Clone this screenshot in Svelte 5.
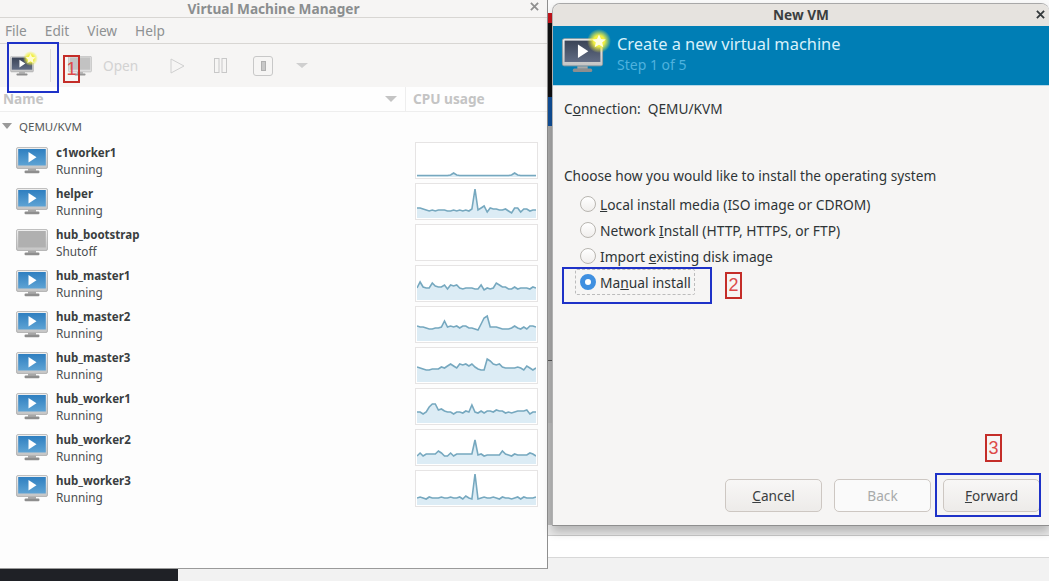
<script lang="ts">
    interface Vm
    {
        name: string;
        status: string;
        cpu: number[];
    }

    const vms: Vm[] = [
        { name: 'c1worker1', status: 'Running', cpu: [1.5,1.5,1.5,1.5,1.5,1.5,1.5,1.5,1.5,1.5,1.5,2,4,2,1.5,1.5,1.5,1.5,1.5,1.5,1.5,1.5,1.5,1.5,1.5,1.5,1.5,1.5,1.5,1.5,1.5,2,4,2,1.5,1.5,1.5,1.5,1.5,1.5] },
        { name: 'helper', status: 'Running', cpu: [10,10,9,8,7,8,7,8,8,8,7,7,8,7,8,7,8,7,9,29,8,10,12,6,10,9,9,8,8,9,7,5,10,10,6,9,9,7,8,8] },
        { name: 'hub_bootstrap', status: 'Shutoff', cpu: [] },
        { name: 'hub_master1', status: 'Running', cpu: [12,18,13,12,12,17,14,13,13,15,11,15,14,15,12,11,12,12,12,11,11,15,10,12,11,12,17,15,13,13,11,11,13,11,12,12,12,11,13,12] },
        { name: 'hub_master2', status: 'Running', cpu: [15,14,14,13,12,12,13,13,14,20,14,15,14,15,13,15,15,13,13,12,11,17,23,25,14,14,14,13,12,12,12,13,15,13,12,14,12,15,15,14] },
        { name: 'hub_master3', status: 'Running', cpu: [15,14,13,12,12,13,13,13,15,14,16,18,16,14,18,17,18,16,18,15,13,12,12,23,21,18,17,18,15,14,14,14,14,15,14,12,16,14,12,14] },
        { name: 'hub_worker1', status: 'Running', cpu: [11,11,9,11,16,19,19,13,14,12,11,11,9,11,11,10,12,11,18,11,10,12,10,12,12,11,13,12,12,10,11,10,11,12,12,12,13,9,11,11] },
        { name: 'hub_worker2', status: 'Running', cpu: [8,11,8,10,10,10,10,13,11,8,8,11,8,10,10,10,10,10,10,24,9,10,8,9,9,9,9,9,13,10,9,8,10,9,9,9,9,11,10,8] },
        { name: 'hub_worker3', status: 'Running', cpu: [7,8,7,6,8,7,7,7,8,7,7,8,7,7,8,6,9,7,6,31,6,7,8,7,7,8,7,6,8,7,7,6,7,8,6,8,7,7,7,8] }
    ];

    const plotWidth = 119;
    const plotHeight = 33;

    function linePoints(cpu: number[]): string
    {
        return cpu
            .map((v, i) => `${(i * plotWidth / (cpu.length - 1)).toFixed(1)},${(plotHeight - v).toFixed(1)}`)
            .join(' ');
    }

    function areaPoints(cpu: number[]): string
    {
        return `0,${plotHeight} ${linePoints(cpu)} ${plotWidth},${plotHeight}`;
    }
</script>

{#snippet monitor(cls: string, frame: string, screen: string, play: boolean)}
    <svg class={cls} viewBox="0 0 32 27">
        <rect x="0.5" y="0.5" width="31" height="21" rx="1.5" fill={frame} stroke="#9a9a9a" stroke-width="0.6" />
        <rect x="2.2" y="2" width="27.6" height="16.5" fill={screen} />
        {#if play}
            <path d="M12.5 5 L20.5 10.2 L12.5 15.5 Z" fill="#ffffff" />
        {/if}
        <rect x="12" y="21.8" width="8" height="2" fill="#a8a8a8" />
        <rect x="8.5" y="23.6" width="15" height="2.6" rx="1.2" fill="#8e8e8e" />
    </svg>
{/snippet}

<svg class="defs" width="0" height="0">
    <defs>
        <linearGradient id="blue-screen" x1="0" y1="0" x2="0" y2="1">
            <stop offset="0" stop-color="#2f7fc0" />
            <stop offset="1" stop-color="#5ea3d4" />
        </linearGradient>
        <linearGradient id="dark-screen" x1="0" y1="0" x2="0" y2="1">
            <stop offset="0" stop-color="#3a4356" />
            <stop offset="1" stop-color="#616c84" />
        </linearGradient>
        <linearGradient id="silver" x1="0" y1="0" x2="0" y2="1">
            <stop offset="0" stop-color="#f0f0f0" />
            <stop offset="1" stop-color="#c4c4c4" />
        </linearGradient>
        <radialGradient id="glow">
            <stop offset="0.45" stop-color="#f2f040" stop-opacity="1" />
            <stop offset="1" stop-color="#eeee44" stop-opacity="0" />
        </radialGradient>
    </defs>
</svg>

<div class="desktop">
    <div class="backdrop">
        <div class="strip-top"></div>
        <div class="strip-red"></div>
        <div class="strip-black"></div>
        <div class="strip-blue"></div>
        <div class="strip-grey"></div>
        <div class="strip-mid"></div>
        <div class="strip-low"></div>
        <div class="strip-under"></div>
        <div class="strip-white"></div>
        <div class="strip-page"></div>
    </div>
    <div class="dock"></div>

    <section class="window manager">
        <header class="manager-title">
            <span>Virtual Machine Manager</span>
            <svg class="close" viewBox="0 0 10 10"><path d="M1 1 L9 9 M9 1 L1 9" /></svg>
        </header>

        <nav class="menu">
            <span>File</span>
            <span>Edit</span>
            <span>View</span>
            <span>Help</span>
        </nav>

        <div class="toolbar">
            <div class="new-icon">
                {@render monitor('tool-monitor', 'url(#silver)', 'url(#dark-screen)', true)}
                <svg class="star-small" viewBox="0 0 20 20">
                    <circle cx="10" cy="10" r="10" fill="url(#glow)" />
                    <path d="M10 3.5 L12 8 L16.8 8.4 L13.2 11.6 L14.3 16.3 L10 13.8 L5.7 16.3 L6.8 11.6 L3.2 8.4 L8 8 Z" fill="#fffbd0" />
                </svg>
            </div>
            <span class="tool-sep"></span>
            <div class="open-tool">
                {@render monitor('tool-monitor', '#dedede', '#bdbdbd', false)}
                <span>Open</span>
            </div>
            <svg class="tool-play" viewBox="0 0 15 16"><path d="M1 1 L14 8 L1 15 Z" /></svg>
            <svg class="tool-pause" viewBox="0 0 13 15"><rect x="0.5" y="0.5" width="4.5" height="14" /><rect x="8" y="0.5" width="4.5" height="14" /></svg>
            <div class="tool-stop"><span></span></div>
            <span class="tool-drop"></span>
        </div>

        <div class="columns">
            <div class="col-name"><span>Name</span><i class="sort"></i></div>
            <div class="col-cpu">CPU usage</div>
        </div>

        <div class="list">
            <div class="group"><i class="expander"></i>QEMU/KVM</div>
            {#each vms as vm}
                <div class="vm">
                    {#if vm.status === 'Running'}
                        {@render monitor('vm-icon', 'url(#silver)', 'url(#blue-screen)', true)}
                    {:else}
                        {@render monitor('vm-icon', 'url(#silver)', '#b0b0b0', false)}
                    {/if}
                    <div class="vm-text">
                        <strong>{vm.name}</strong>
                        <span>{vm.status}</span>
                    </div>
                    <svg class="graph" viewBox="0 0 {plotWidth} {plotHeight}" preserveAspectRatio="none">
                        {#if vm.cpu.length}
                            <polygon points={areaPoints(vm.cpu)} fill="#dcecf5" />
                            <polyline points={linePoints(vm.cpu)} fill="none" stroke="#76a8bf" stroke-width="1.6" />
                        {/if}
                    </svg>
                </div>
            {/each}
        </div>
    </section>

    <section class="window dialog">
        <header class="dialog-title">
            <span>New VM</span>
            <svg class="close dark" viewBox="0 0 10 10"><path d="M1 1 L9 9 M9 1 L1 9" /></svg>
        </header>

        <div class="banner">
            <div class="banner-icon">
                {@render monitor('banner-monitor', 'url(#silver)', 'url(#dark-screen)', true)}
                <svg class="star-big" viewBox="0 0 24 24">
                    <circle cx="12" cy="12" r="12" fill="url(#glow)" />
                    <path d="M12 5.5 L14 10 L18.8 10.4 L15.2 13.6 L16.3 18.3 L12 15.8 L7.7 18.3 L8.8 13.6 L5.2 10.4 L10 10 Z" fill="#fffde0" />
                </svg>
            </div>
            <div class="banner-text">
                <h1>Create a new virtual machine</h1>
                <p>Step 1 of 5</p>
            </div>
        </div>

        <div class="dialog-body">
            <div class="connection">C<u>o</u>nnection:&nbsp; QEMU/KVM</div>
            <div class="prompt">Choose how you would like to install the operating system</div>
            <div class="options">
                <label class="option"><i class="radio"></i><span><u>L</u>ocal install media (ISO image or CDROM)</span></label>
                <label class="option"><i class="radio"></i><span>Network <u>I</u>nstall (HTTP, HTTPS, or FTP)</span></label>
                <label class="option"><i class="radio"></i><span>Import <u>e</u>xisting disk image</span></label>
                <label class="option selected"><i class="radio on"></i><span>Ma<u>n</u>ual install</span></label>
            </div>
            <div class="actions">
                <button><u>C</u>ancel</button>
                <button class="off" disabled>Back</button>
                <button><u>F</u>orward</button>
            </div>
        </div>
    </section>

    <!-- hand-drawn tutorial marks over the screenshot -->
    <div class="mark blue b1"></div>
    <div class="mark red r1">1</div>
    <div class="mark blue b2"></div>
    <div class="mark red r2">2</div>
    <div class="mark red r3">3</div>
    <div class="mark blue b3"></div>
</div>

<style>
    :global(body)
    {
        margin: 0;
    }

    .defs
    {
        position: absolute;
    }

    .desktop
    {
        position: relative;
        width: 1049px;
        height: 581px;
        overflow: hidden;
        background: #f2f2f2;
        font-family: "Noto Sans", sans-serif;
        font-size: 13.65px;
        color: #2e3436;
    }

    .backdrop
    {
        position: absolute;
        inset: 0;
        display: flex;
        flex-direction: column;
    }

    .strip-top { height: 13px; background: #fafafa; }
    .strip-red { height: 10px; background: #c8141c; }
    .strip-black { height: 74px; background: #101012; }
    .strip-blue { height: 29px; background: #10509a; }
    .strip-grey { height: 234px; background: #a9a9a9; }
    .strip-mid { height: 62px; background: #b4b4b4; border-top: 1px solid #555555; }
    .strip-low { height: 102px; background: #bcbcbc; }
    .strip-under { height: 10px; background: #e9e9e9; }
    .strip-white { height: 21px; background: #ffffff; border-top: 1px solid #c8c8c8; border-bottom: 1px solid #d8d8d8; }
    .strip-page { flex: 1; background: #f2f2f2; }

    .dock
    {
        position: absolute;
        left: 0;
        bottom: 0;
        width: 178px;
        height: 13px;
        background: #1f2126;
    }

    .window
    {
        position: absolute;
        display: flex;
        flex-direction: column;
        box-sizing: border-box;
    }

    .manager
    {
        left: 0;
        top: 0;
        width: 548px;
        height: 569px;
        background: #fdfdfd;
        border-right: 1px solid #8f8f8f;
        border-bottom: 1px solid #9a9a9a;
    }

    .manager-title
    {
        position: relative;
        height: 17px;
        flex-shrink: 0;
        display: flex;
        align-items: center;
        justify-content: center;
        border-bottom: 1px solid #d8d6d3;
        background: #f6f5f4;
        color: #8b8e8f;
        font-weight: 700;
    }

    .close
    {
        position: absolute;
        right: 8px;
        top: 2px;
        width: 9px;
        height: 9px;
        fill: none;
        stroke: #8f8f8f;
        stroke-width: 2;
    }

    .menu
    {
        height: 26px;
        flex-shrink: 0;
        box-sizing: border-box;
        padding-left: 5px;
        display: flex;
        align-items: center;
        gap: 18px;
        background: #f6f5f4;
        color: #8e9192;
        border-bottom: 1px solid #d8d6d3;
    }

    .toolbar
    {
        height: 43px;
        flex-shrink: 0;
        display: flex;
        align-items: center;
        background: #f6f5f4;
    }

    .new-icon
    {
        position: relative;
        margin-left: 10px;
        width: 24px;
        height: 20px;
    }

    .tool-monitor
    {
        display: block;
        width: 24px;
        height: 20px;
    }

    .star-small
    {
        position: absolute;
        right: -4px;
        top: -5px;
        width: 15px;
        height: 15px;
    }

    .tool-sep
    {
        width: 1px;
        height: 33px;
        margin-left: 16px;
        background: #e0dedb;
    }

    .open-tool
    {
        margin-left: 17px;
        display: flex;
        align-items: center;
        gap: 11px;
        color: #cfcfcf;
        opacity: 0.9;
    }

    .tool-play
    {
        margin-left: 32px;
        width: 15px;
        height: 16px;
        fill: none;
        stroke: #d0d0d0;
        stroke-width: 1;
    }

    .tool-pause
    {
        margin-left: 29px;
        width: 13px;
        height: 15px;
        fill: none;
        stroke: #c8c8c8;
        stroke-width: 1;
    }

    .tool-stop
    {
        margin-left: 26px;
        width: 18px;
        height: 18px;
        border: 1px solid #c8c8c8;
        border-radius: 3px;
        display: flex;
        align-items: center;
        justify-content: center;
    }

    .tool-stop span
    {
        width: 5px;
        height: 10px;
        background: #c8c8c8;
        border: 1px solid #b0b0b0;
        box-sizing: border-box;
    }

    .tool-drop
    {
        margin-left: 23px;
        border-left: 6px solid transparent;
        border-right: 6px solid transparent;
        border-top: 5px solid #cfcfcf;
    }

    .columns
    {
        height: 24px;
        flex-shrink: 0;
        display: grid;
        grid-template-columns: 406px 1fr;
        background: #fefefe;
        border-bottom: 1px solid #eeeeee;
        color: #c4c4c4;
        font-weight: 700;
    }

    .col-name
    {
        display: flex;
        align-items: center;
        justify-content: space-between;
        padding: 0 8px 1px 3px;
        border-right: 1px solid #eeeeee;
    }

    .sort
    {
        border-left: 6px solid transparent;
        border-right: 6px solid transparent;
        border-top: 6px solid #c4c4c4;
    }

    .col-cpu
    {
        display: flex;
        align-items: center;
        padding: 0 0 1px 7px;
    }

    .list
    {
        flex: 1;
        display: flex;
        flex-direction: column;
    }

    .group
    {
        height: 28px;
        flex-shrink: 0;
        display: flex;
        align-items: center;
        font-size: 11.5px;
        color: #55595a;
        padding-left: 2px;
        gap: 7px;
    }

    .expander
    {
        border-left: 5px solid transparent;
        border-right: 5px solid transparent;
        border-top: 6px solid #9a9a9a;
    }

    .vm
    {
        height: 41px;
        flex-shrink: 0;
        display: flex;
        align-items: center;
        padding-left: 16px;
    }

    .vm-icon
    {
        width: 32px;
        height: 27px;
        flex-shrink: 0;
    }

    .vm-text
    {
        margin-left: 8px;
        width: 359px;
        display: flex;
        flex-direction: column;
        font-size: 11.5px;
        line-height: 16px;
        color: #4a4e50;
    }

    .vm-text strong
    {
        color: #3a3e40;
    }

    .vm-text span
    {
        font-size: 11.8px;
    }

    .graph
    {
        width: 119px;
        height: 33px;
        padding: 1px;
        border: 1px solid #e6e4e4;
        background: #ffffff;
        flex-shrink: 0;
    }

    .dialog
    {
        left: 552px;
        top: 3px;
        width: 497px;
        height: 523px;
        background: #f6f5f4;
        border-radius: 8px 8px 0 0;
        border-top: 1px solid #a8a8a8;
        border-left: 1px solid #b0b0b0;
        border-bottom: 1px solid #8f8f8f;
        box-shadow: 0 6px 10px rgba(0, 0, 0, 0.22);
    }

    .dialog-title
    {
        position: relative;
        height: 22px;
        flex-shrink: 0;
        box-sizing: border-box;
        padding-bottom: 2px;
        display: flex;
        align-items: center;
        justify-content: center;
        background: #e6e3df;
        border-radius: 8px 8px 0 0;
        font-weight: 700;
        color: #3a3e40;
    }

    .close.dark
    {
        stroke: #33383a;
        right: 4px;
        top: 6px;
    }

    .banner
    {
        height: 60px;
        flex-shrink: 0;
        display: flex;
        align-items: center;
        background: #007eb5;
        padding-left: 8px;
        border-bottom: 1px solid #b8d8e8;
        box-sizing: border-box;
    }

    .banner-icon
    {
        position: relative;
        width: 43px;
        height: 35px;
    }

    .banner-monitor
    {
        display: block;
        width: 43px;
        height: 35px;
    }

    .star-big
    {
        position: absolute;
        right: -7px;
        top: -9px;
        width: 24px;
        height: 24px;
    }

    .banner-text
    {
        margin-left: 13px;
        padding-bottom: 3px;
    }

    .banner h1
    {
        margin: 0;
        font-size: 16.4px;
        font-weight: 400;
        line-height: 22px;
        color: #d8f1fb;
    }

    .banner p
    {
        margin: 0;
        font-size: 14px;
        line-height: 20px;
        color: #4fb2de;
    }

    .dialog-body
    {
        flex: 1;
        display: flex;
        flex-direction: column;
        padding: 0 9px 0 11px;
    }

    .connection
    {
        margin-top: 13px;
        line-height: 20px;
    }

    .prompt
    {
        margin-top: 47px;
        line-height: 20px;
    }

    .options
    {
        margin-top: 5px;
        padding-left: 16px;
        display: flex;
        flex-direction: column;
        align-items: flex-start;
        font-size: 13.8px;
    }

    .option
    {
        height: 26px;
        display: flex;
        align-items: center;
        gap: 4px;
    }

    .option.selected
    {
        box-sizing: border-box;
        margin-left: -5px;
        padding: 0 3px 0 4px;
        border: 1px dashed #bcbcbc;
        border-radius: 2px;
    }

    .radio
    {
        width: 16px;
        height: 16px;
        border-radius: 50%;
        border: 1px solid #b8b5b0;
        background: linear-gradient(#ffffff, #f0eeec);
        box-sizing: border-box;
    }

    .radio.on
    {
        border: 5px solid #3f8fe0;
        background: #ffffff;
    }

    .actions
    {
        margin-top: auto;
        margin-bottom: 13px;
        display: flex;
        justify-content: flex-end;
        gap: 12px;
    }

    button
    {
        width: 97px;
        height: 33px;
        padding: 0;
        font: inherit;
        color: #3a3e40;
        border: 1px solid #cdc7c2;
        border-radius: 5px;
        background: linear-gradient(#f8f7f6, #edebe9);
    }

    button.off
    {
        background: #fafafa;
        color: #a8aaaa;
    }

    .mark
    {
        position: absolute;
        box-sizing: border-box;
        border: 2px solid;
        display: flex;
        align-items: center;
        justify-content: center;
        font-family: "Liberation Sans", sans-serif;
        font-size: 18px;
        color: #dd4a48;
    }

    .blue { border-color: #1e32c8; }
    .red { border-color: #c42d28; }

    .b1 { left: 7px; top: 42px; width: 52px; height: 51px; }
    .r1 { left: 63px; top: 55px; width: 17px; height: 28px; }
    .b2 { left: 562px; top: 267px; width: 150px; height: 37px; }
    .r2 { left: 725px; top: 272px; width: 17px; height: 27px; }
    .r3 { left: 985px; top: 434px; width: 17px; height: 28px; }
    .b3 { left: 935px; top: 473px; width: 106px; height: 44px; }
</style>
